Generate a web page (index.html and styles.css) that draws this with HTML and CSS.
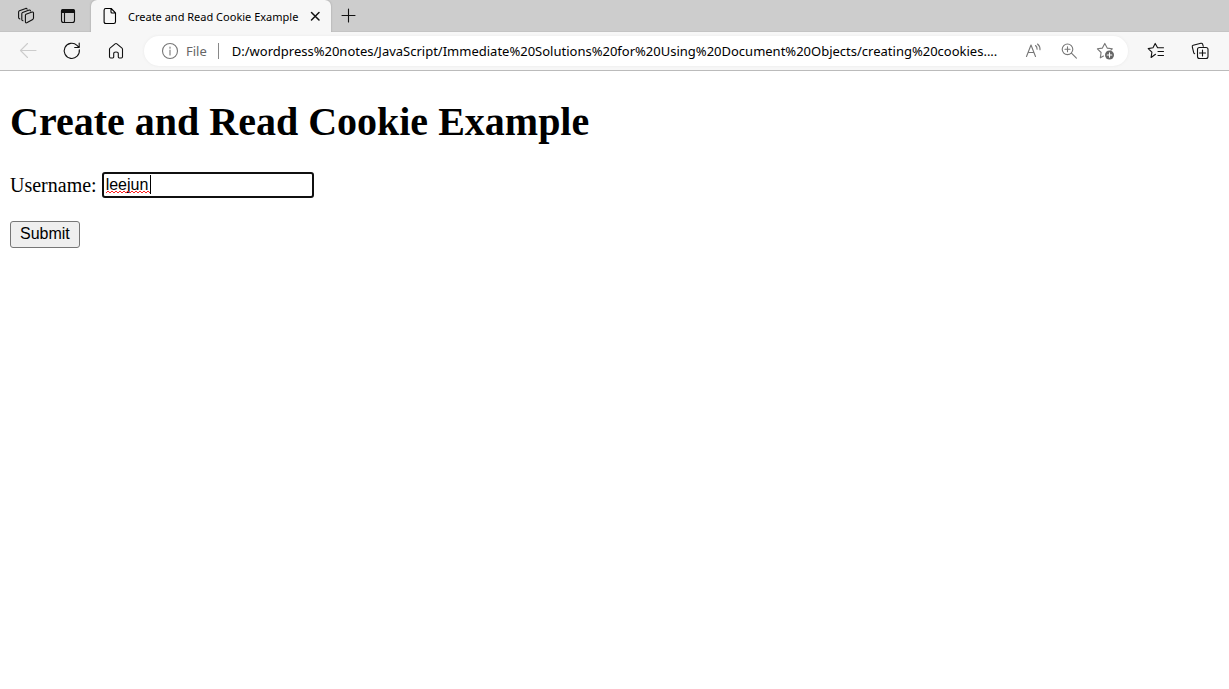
FILE: index.html
```html
<!DOCTYPE html>
<html lang="en">
<head>
<meta charset="utf-8">
<title>Create and Read Cookie Example</title>
<link rel="stylesheet" href="styles.css">
</head>
<body>
<header class="browser">
  <div class="tab-strip">
    <button class="strip-button" type="button" aria-label="Workspaces">
      <svg class="icon" viewBox="0 0 20 20"><path d="m10 8.3 6-2.2q1.5-.4 1.5 1v5q0 .9-.8 1.3l-5.5 3.2q-1.8.9-1.8-.9V9.6q0-.9.6-1.3M7 14.8q-1.2-.1-1.2-1.3V7.8q0-.9.8-1.3l6.6-2.4q1.1-.3 1.3.8M3.8 12.9q-1.2-.1-1.2-1.3V6q0-.9.8-1.3l6.4-2.3q1.1-.3 1.3.8"/></svg>
    </button>
    <button class="strip-button" type="button" aria-label="Tab actions">
      <svg class="icon" viewBox="0 0 20 20"><rect x="3.5" y="3.5" width="13" height="13" rx="2"/><path class="solid" d="M3.5 6.5V5q0-1.5 1.5-1.5h10q1.5 0 1.5 1.5v1.5z"/><path d="M6.5 7v9.2"/></svg>
    </button>
    <div class="tab">
      <svg class="icon" viewBox="0 0 20 20"><path d="M5.8 2.5h5.4l4.3 4.3v9q0 1.7-1.7 1.7h-8q-1.7 0-1.7-1.7V4.2q0-1.7 1.7-1.7M11 2.7V6q0 1 1 1h3.3"/></svg>
      <span class="tab-title">Create and Read Cookie Example</span>
      <button class="close" type="button" aria-label="Close tab">
        <svg class="icon" viewBox="0 0 20 20"><path class="heavy" d="m6.5 6.5 7.5 7.5m0-7.5L6.500 14"/></svg>
      </button>
    </div>
    <button class="new-tab" type="button" aria-label="New tab">
      <svg class="icon" viewBox="0 0 20 20"><path d="M10.5 3v13m-6.500-6.500h13"/></svg>
    </button>
  </div>
  <nav class="toolbar">
    <button class="tool" type="button" aria-label="Back" disabled>
      <svg class="icon" viewBox="0 0 20 20"><path d="M18 9.5H2.500m7-7-7 7 7 7"/></svg>
    </button>
    <button class="tool" type="button" aria-label="Refresh">
      <svg class="icon" viewBox="0 0 20 20"><path d="M17.300 8.700A7.600 7.600 0 1 1 15 4.300l2 2M17.200 2v4.500h-4.500"/></svg>
    </button>
    <button class="tool" type="button" aria-label="Home">
      <svg class="icon" viewBox="0 0 20 20"><path d="M3.500 8.200q0-.7.500-1.100l5.100-4.200q.9-.7 1.800 0L16 7.100q.5.400.5 1.100v7.600q0 1.200-1.200 1.200h-2.100q-.9 0-.9-.9v-3.600q0-1.500-2.300-1.500t-2.300 1.500v3.600q0 .9-.9.900H4.700q-1.200 0-1.200-1.200z"/></svg>
    </button>
    <div class="address-bar">
      <svg class="icon muted" viewBox="0 0 20 20"><circle cx="10" cy="10" r="7.500"/><path d="M10 9v5M10 6v1.200"/></svg>
      <span class="scheme">File</span>
      <span class="address">D:/wordpress%20notes/JavaScript/Immediate%20Solutions%20for%20Using%20Document%20Objects/creating%20cookies....</span>
      <button class="action" type="button" aria-label="Read aloud">
        <svg class="icon muted" viewBox="0 0 20 20"><path d="M3.500 15.500 8 4l4.500 11.500M5 11.500h6M12.500 4.500q1.700 1.500 1.600 3.700M14.500 3q2.800 2.300 2.500 5.700"/></svg>
      </button>
      <button class="action" type="button" aria-label="Zoom">
        <svg class="icon muted" viewBox="0 0 20 20"><circle cx="8.500" cy="8.300" r="5.300"/><path d="m12.400 12.200 5 5M8.500 5.800v5M6 8.300h5"/></svg>
      </button>
      <button class="action" type="button" aria-label="Add to favorites">
        <svg class="icon muted" viewBox="0 0 20 20"><path d="m8.500 15-3.200 1.800.8-5.300-3.700-3.700 5-.7 2.400-4.700 2.400 4.700 5.100.7-1.400 1.400"/><circle class="disc" cx="14.500" cy="14" r="4.500"/><path class="light" d="M14.500 11.700v4.600M12.200 14h4.600"/></svg>
      </button>
    </div>
    <button class="tool" type="button" aria-label="Favorites">
      <svg class="icon" viewBox="0 0 20 20"><path d="m9.500 13.300-4.400 3.200.8-5.300-3.700-3.600 4.800-.8 2.200-4.400 2.400 4.400h5.900M12 10.500h5.500M12 14.500h5.500"/></svg>
    </button>
    <button class="tool" type="button" aria-label="Collections">
      <svg class="icon" viewBox="0 0 20 20"><path d="M4.700 12.700q-.8-.2-1-1.100L2.300 5.900q-.3-1.200.9-1.600l7.700-2q1.200-.3 1.700.8l.7 2.200"/><rect x="7.500" y="6.500" width="10.500" height="11" rx="2"/><path d="M12.500 9v6M9.500 12h6"/></svg>
    </button>
  </nav>
</header>
<main class="page">
  <h1>Create and Read Cookie Example</h1>
  <form>
    <div class="field">
      <label for="username">Username:</label>
      <div class="entry">
        <input class="username" id="username" type="text" value="leejun" spellcheck="false">
        <svg class="spelling" viewBox="0 0 44 4" aria-hidden="true"><path d="M0 3l2-2 2 2 2-2 2 2 2-2 2 2 2-2 2 2 2-2 2 2 2-2 2 2 2-2 2 2 2-2 2 2 2-2 2 2 2-2 2 2 2-2 2 2"/></svg>
        <span class="caret"></span>
      </div>
    </div>
    <button class="submit" type="button">Submit</button>
  </form>
</main>
</body>
</html>
```
FILE: styles.css
```css
* { box-sizing: border-box; }

body {
  margin: 0;
  background: #fff;
  color: #000;
  font-family: "Liberation Serif", "Times New Roman", serif;
  font-size: 20px;
}

.browser {
  background: #f7f7f7;
  border-bottom: 1px solid #bbb;
  font-family: "Noto Sans", "Open Sans", sans-serif;
}

.browser button {
  display: flex;
  align-items: center;
  justify-content: center;
  flex: none;
  padding: 0;
  border: 0;
  background: none;
  color: #111;
}

.icon {
  flex: none;
  width: 20px;
  height: 20px;
  fill: none;
  stroke: currentColor;
  stroke-width: 1.1;
  stroke-linecap: round;
  stroke-linejoin: round;
}

.icon .heavy { stroke-width: 1.5; }
.icon .solid { fill: currentColor; }
.icon .disc { fill: #666; stroke: none; }
.icon .light { stroke: #fff; }
.muted { color: #777; }

.tab-strip {
  display: flex;
  height: 32px;
  padding-left: 5px;
  background: #cdcdcd;
  box-shadow: inset 0 -1px #c4c4c4;
}

.browser .strip-button { width: 42px; }

.tab {
  display: flex;
  align-items: center;
  width: 240px;
  margin-left: 2px;
  padding: 0 6px 0 9px;
  border-radius: 6px 6px 0 0;
  background: #f7f7f7;
  box-shadow: 0 0 2px #999;
  clip-path: inset(0 -3px);
}

.tab-title {
  flex: 1;
  min-width: 0;
  margin-left: 8px;
  font-size: 11px;
  white-space: nowrap;
}

.browser .new-tab { width: 34px; }

.toolbar {
  display: flex;
  align-items: center;
  height: 38px;
  padding: 0 7px 0 6px;
}

.browser .tool { width: 44px; height: 30px; }
.browser .tool:disabled { color: #ccc; }

.address-bar {
  display: flex;
  align-items: center;
  flex: 1;
  min-width: 0;
  height: 30px;
  margin: 0 6px;
  padding: 0 5px 0 16px;
  border-radius: 15px;
  background: #fff;
  box-shadow: 0 0 3px #e8e8e8;
  font-size: 13px;
}

.scheme {
  margin-left: 6px;
  padding-right: 11px;
  border-right: 1px solid #888;
  color: #666;
  line-height: 16px;
}

.address {
  flex: 1;
  min-width: 0;
  margin-left: 13px;
  overflow: hidden;
  white-space: nowrap;
}

.browser .action { width: 36px; }

.page { padding: 27px 10px; }

h1 {
  margin: 0 0 26px;
  font-size: 40px;
  line-height: 48px;
}

.field {
  display: flex;
  align-items: center;
  gap: 5px;
  line-height: 22px;
}

.entry { position: relative; }

.username {
  display: block;
  width: 212px;
  height: 26px;
  padding: 0 2px;
  border: 2px solid #101010;
  border-radius: 3px;
  outline: none;
  font: 16px "Liberation Sans", Arial, sans-serif;
}

.spelling {
  position: absolute;
  left: 4px;
  top: 18px;
  width: 44px;
  height: 4px;
  fill: none;
  stroke: #f22;
}

.caret {
  position: absolute;
  left: 48px;
  top: 3px;
  width: 1px;
  height: 19px;
  background: #000;
}

.submit {
  margin-top: 23px;
  padding: 2px 9px 3px;
  border: 1px solid #767676;
  border-radius: 3px;
  background: #efefef;
  color: #000;
  font: 16px/20px "Liberation Sans", Arial, sans-serif;
}
```
